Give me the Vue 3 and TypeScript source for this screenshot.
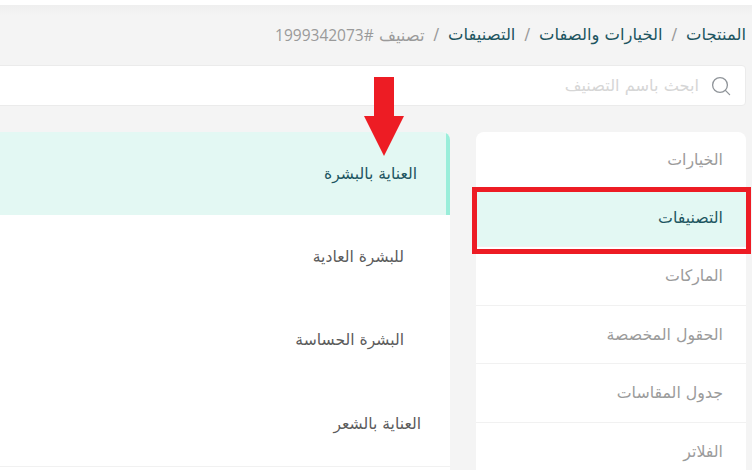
<script setup lang="ts">
const crumbs = ['المنتجات', 'الخيارات والصفات', 'التصنيفات']
const sideItems = ['الخيارات', 'التصنيفات', 'الماركات', 'الحقول المخصصة', 'جدول المقاسات', 'الفلاتر']
const cats = [
  { name: 'العناية بالبشرة', cls: 'lvl-a' },
  { name: 'للبشرة العادية', cls: 'lvl-b' },
  { name: 'البشرة الحساسة', cls: 'lvl-b' },
  { name: 'العناية بالشعر', cls: 'lvl-c' },
]
</script>

<template>
  <div class="page" dir="rtl">
    <nav class="crumbs">
      <template v-for="c in crumbs" :key="c">
        <a class="crumb">{{ c }}</a>
        <span class="sep">/</span>
      </template>
      <span class="current">تصنيف <span class="num">#1999342073</span></span>
    </nav>

    <div class="search">
      <svg class="search-icon" viewBox="0 0 20 20" width="20" height="20" fill="none" stroke="#8f9499" stroke-width="1.3">
        <circle cx="9" cy="9" r="7.4" />
        <path d="M14.4 14.4 18.6 18.6" stroke-linecap="round" />
      </svg>
      <span class="placeholder">ابحث باسم التصنيف</span>
    </div>

    <div class="columns">
      <ul class="side">
        <li v-for="(s, i) in sideItems" :key="s" class="side-item" :class="{ active: i === 1 }">{{ s }}</li>
      </ul>
      <ul class="cats">
        <li v-for="(c, i) in cats" :key="c.name" class="cat" :class="[c.cls, { active: i === 0 }]">{{ c.name }}</li>
      </ul>
    </div>

    <div class="highlight"></div>
    <svg class="arrow" width="42" height="79" viewBox="0 0 42 79">
      <path d="M11 0H31V39H41L21 79 1 39H11Z" fill="#ed1c24" />
    </svg>
  </div>
</template>

<style>
html, body { margin: 0; padding: 0; background: #fff; }
</style>

<style scoped>
.page {
  position: relative;
  width: 752px;
  height: 470px;
  overflow: hidden;
  box-sizing: border-box;
  border-top: 5px solid #fff;
  background: linear-gradient(#efefef, #f4f4f4 10px);
  font-family: "DejaVu Sans", "Noto Sans", sans-serif;
  padding: 0 6px 0 0;
}
.crumbs {
  display: flex;
  align-items: center;
  gap: 9px;
  height: 59px;
  font-size: 16.4px;
  color: #1d5560;
  white-space: nowrap;
}
.sep, .current { color: #9a9a9a; }
.num { font-family: "Open Sans", sans-serif; font-size: 15.5px; }
.search {
  display: flex;
  align-items: center;
  gap: 12px;
  height: 41px;
  width: 790px;
  margin-top: 1px;
  box-sizing: border-box;
  padding: 0 14px;
  background: #fff;
  border: 1px solid #ebebeb;
  border-radius: 4px;
  color: #d6d6d6;
  font-size: 16.2px;
}
.search-icon { flex: none; }
.columns {
  display: flex;
  gap: 26px;
  margin-top: 26px;
}
.side, .cats {
  list-style: none;
  margin: 0;
  padding: 0;
  background: #fff;
  flex: none;
}
.side {
  width: 270px;
  border-radius: 8px 8px 0 0;
  overflow: hidden;
}
.side-item {
  display: flex;
  align-items: center;
  height: 58.5px;
  padding: 0 23px;
  box-sizing: border-box;
  border-bottom: 1px solid #f1f1f1;
  color: #9b9b9b;
  font-size: 15.8px;
}
.side-item:first-child { height: 56.5px; }
.side-item.active {
  background: #e3f8f3;
  color: #1d5560;
}
.cats {
  width: 460px;
  border-radius: 8px 8px 0 0;
  overflow: hidden;
}
.cat {
  display: flex;
  align-items: center;
  height: 83px;
  box-sizing: border-box;
  color: #5b5b5b;
  font-size: 15.6px;
}
.cat:last-child { height: 86px; border-bottom: 1px solid #f1f1f1; }
.lvl-a { padding-right: 33px; }
.lvl-b { padding-right: 46px; }
.lvl-c { padding-right: 29px; }
.cat.active {
  background: #e3f8f3;
  color: #1d5560;
  border-right: 4px solid #9aeeda;
  padding-right: 29px;
}
.highlight {
  position: absolute;
  left: 472px;
  top: 182px;
  width: 279px;
  height: 67px;
  box-sizing: border-box;
  border: 5px solid #ed1c24;
}
.arrow {
  position: absolute;
  left: 363px;
  top: 72px;
}
</style>
